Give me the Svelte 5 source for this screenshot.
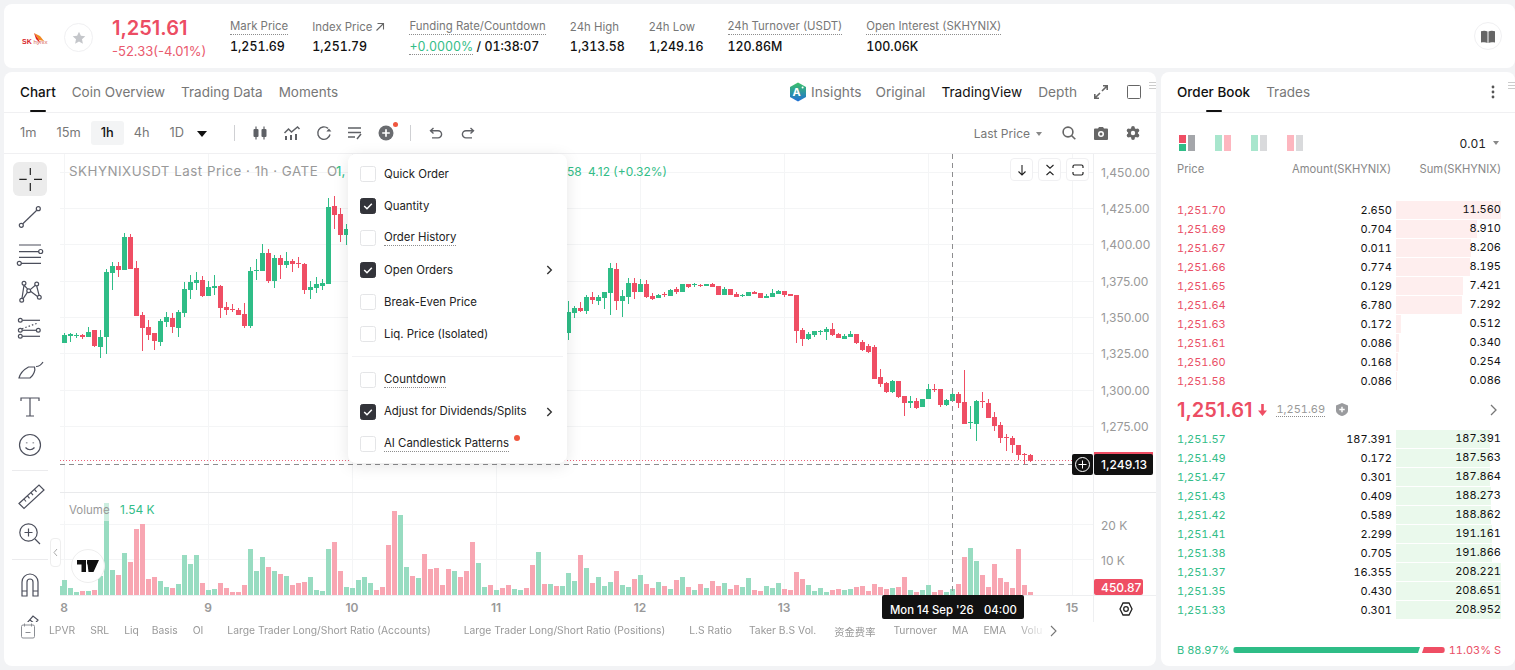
<script>
  const RED = '#ef4e64';
  const GREEN = '#2fbd87';

  // traced off the chart, units are 1/3 px: [body top, body bottom, wick top, wick bottom, green?]
  const seg = (cx0, y0, rows) =>
    rows.map((r, i) => ({
      cx: cx0 + i * 6,
      top: y0 + r[0] / 3,
      bot: y0 + r[1] / 3,
      wt: y0 + r[2] / 3,
      wb: y0 + r[3] / 3,
      up: !!r[4]
    }));

  const candles = [
    ...seg(64, 170, [
      [495,518,490,518,1],[493,497,490,515,1],[494,497,489,503,1],[494,500,492,506,0],[486,500,472,500,1],
      [480,527,480,530,0],[501,530,480,563,1],[306,500,297,552,1],[288,309,277,360,1],[288,300,277,320,0],
      [201,299,190,299,1],[201,297,193,297,0],[294,437,273,437,0],[435,473,427,542,0],[471,495,450,510,0],
      [489,513,489,540,0],[453,516,448,527,1],[441,456,427,471,1],[444,471,430,489,0],[426,474,421,500,1],
      [357,429,336,440,1],[336,360,315,387,1],[330,339,306,360,1],[330,378,318,382,0],[351,378,333,378,1],
      [348,354,315,375,1],[348,413,345,444,0],[411,420,396,435,0],[417,420,402,426,0],[420,435,414,435,0],
      [432,468,399,474,0],[303,468,292,474,1],[300,303,267,330,1],[249,303,222,303,1],[249,333,237,339,0],
      [264,333,255,354,1],[264,285,255,327,0],[273,285,246,294,1],[273,282,267,306,0],[279,282,262,294,0],
      [282,360,279,372,0],[351,360,333,387,1],[342,354,321,369,1],[339,348,327,360,1],[111,342,84,342,1],
      [108,135,78,178,0],[132,195,114,216,0],[177,195,162,225,1]
    ]),
    ...seg(568, 250, [
      [186,248,153,270,1],[174,189,168,204,1],[174,184,156,186,0],[141,183,135,192,1],[141,150,126,162,0],
      [141,153,135,165,1],[126,144,126,177,1],[54,129,39,195,1],[57,153,39,180,0],[138,153,120,201,1],
      [99,141,84,162,1],[99,126,84,147,0],[102,126,87,126,1],[102,141,90,144,0],[138,147,129,150,0],
      [135,144,132,144,1],[132,136,126,141,0],[120,138,117,138,1],[118,126,111,132,0],[102,126,102,126,1],
      [102,111,102,114,0],[103,106,99,111,1],[105,107,103,110,0],[102,107,102,107,1],[102,110,99,111,0],
      [108,135,108,135,0],[117,135,111,135,1],[117,135,117,135,0],[132,141,126,141,0],[135,137,132,141,1],
      [126,138,126,138,1],[126,132,123,132,0],[129,144,129,144,0],[138,144,132,144,1],[129,141,117,141,1],
      [123,132,120,132,1],[123,135,123,141,0],[132,137,132,137,0],[135,243,135,279,0],[240,267,234,288,0],
      [252,267,246,270,1],[243,255,243,261,1],[242,244,240,255,1],[237,246,231,270,1],[237,255,219,258,0],
      [252,264,249,264,0],[258,267,252,267,1],[252,261,243,261,1],[252,279,252,282,0]
    ]),
    ...seg(862, 350, [
      [-24,0,-30,3,0],[-12,5,-18,8,0],[-9,87,-15,87,0],[82,102,57,112,0],[98,126,95,130,0],[92,126,90,128,1],
      [93,141,93,143,0],[138,158,138,197,0],[152,158,139,174,1],[153,175,145,177,0],[147,171,147,171,1],
      [117,147,102,147,1],[117,121,102,127,0],[117,165,117,171,0],[150,165,147,168,1],[132,153,129,153,1],
      [132,159,126,174,0],[156,222,60,222,0],[216,219,168,237,1],[153,222,150,273,1],[154,157,127,174,0],
      [159,205,148,205,0],[201,228,186,243,0],[225,264,216,279,0],[261,263,252,303,0],[264,285,258,309,0],
      [285,315,285,330,0],[312,316,309,342,0],[315,333,312,336,0]
    ])
  ];

  // volume pane, tops in the same 1/3 px units, g = green, r = red
  const volFrom = (cx0, y0, tops, colours) =>
    tops.map((t, i) => ({ cx: cx0 + i * 6, top: y0 + t / 3, up: colours[i] === 'g' }));

  const volumes = [
    ...volFrom(64, 495,
      [255,279,291,288,288,285,243,24,225,240,174,201,102,87,252,246,258,276,279,267,180,207,180,264,285,282,264,279,291,291,270,162,228,186,216,228,237,243,270,264,261,246,285,288,162,141,228,276,279,255,246,264,285,276,150,48,60,216,243,249,177,222,219,270,222,228,246,228,141,204,276,270,285,279,270,282,285,279,210,171,267,267,273],
      'gggrgrgggr' + 'grrrrrggrg' + 'gggrggrrrr' + 'rgggrgrgrr' + 'rggggrrggg' + 'ggrrrrggrg' + 'rrrrrgrrrg' + 'grgrrggrrg' + 'rgr'
    ),
    ...[9,22,14,40,27,12,18,9,13,24,10,8,16,20,11,7,13,9,6,15,18,8,5,11,7,14,9,12,6,10,8,17,5,4,9,7,12,6,5,23,16,10,4,7,3,5,6,5,6,8]
      .map((h, i) => {
        const cx = 562 + i * 6;
        const c = candles.find((k) => k.cx === cx);
        return { cx, top: 595 - h, up: c ? c.up : true };
      }),
    ...volFrom(862, 350,
      [708,723,702,711,717,714,711,681,720,726,720,705,726,720,726,717,702,621,594,633,675,711,642,684,696,714,597,705,726],
      'rrrrrgrrgrggrrggrrggrrrrrrrrr'
    )
  ];

  const priceTicks = [
    ['1,450.00', 172], ['1,425.00', 208], ['1,400.00', 244], ['1,375.00', 281],
    ['1,350.00', 317], ['1,325.00', 353], ['1,300.00', 390], ['1,275.00', 426]
  ];
  const timeTicks = [['8', 64], ['9', 208], ['10', 352], ['11', 496], ['12', 640], ['13', 784], ['15', 1072]];

  const stats = [
    { label: 'Mark Price', value: '1,251.69', dotted: true },
    { label: 'Index Price', value: '1,251.79', arrow: true },
    { label: 'Funding Rate/Countdown', funding: true, dotted: true },
    { label: '24h High', value: '1,313.58' },
    { label: '24h Low', value: '1,249.16' },
    { label: '24h Turnover (USDT)', value: '120.86M', dotted: true },
    { label: 'Open Interest (SKHYNIX)', value: '100.06K', dotted: true }
  ];

  const menu = [
    { label: 'Quick Order' },
    { label: 'Quantity', on: true },
    { label: 'Order History', dotted: true },
    { label: 'Open Orders', on: true, more: true },
    { label: 'Break-Even Price' },
    { label: 'Liq. Price (Isolated)' }
  ];
  const menu2 = [
    { label: 'Countdown', dotted: true },
    { label: 'Adjust for Dividends/Splits', on: true, more: true },
    { label: 'AI Candlestick Patterns', dotted: true, dot: true }
  ];

  const intervals = ['1m', '15m', '1h', '4h', '1D'];

  const indicators = [
    { t: 'LPVR' }, { t: 'SRL' }, { t: 'Liq', cls: 'tight' }, { t: 'Basis' }, { t: 'OI' },
    { t: 'Large Trader Long/Short Ratio (Accounts)', cls: 'wide' },
    { t: 'Large Trader Long/Short Ratio (Positions)', cls: 'wide' },
    { t: 'L.S Ratio', cls: 'gap' }, { t: 'Taker B.S Vol.' }, { t: '资金费率', cls: 'cjk' },
    { t: 'Turnover' }, { t: 'MA' }, { t: 'EMA' }, { t: 'Volu' }
  ];

  const asks = [
    ['1,251.70', '2.650', 11.56], ['1,251.69', '0.704', 8.91], ['1,251.67', '0.011', 8.206],
    ['1,251.66', '0.774', 8.195], ['1,251.65', '0.129', 7.421], ['1,251.64', '6.780', 7.292],
    ['1,251.63', '0.172', 0.512], ['1,251.61', '0.086', 0.34], ['1,251.60', '0.168', 0.254],
    ['1,251.58', '0.086', 0.086]
  ];
  const bids = [
    ['1,251.57', '187.391', 187.391], ['1,251.49', '0.172', 187.563], ['1,251.47', '0.301', 187.864],
    ['1,251.43', '0.409', 188.273], ['1,251.42', '0.589', 188.862], ['1,251.41', '2.299', 191.161],
    ['1,251.38', '0.705', 191.866], ['1,251.37', '16.355', 208.221], ['1,251.35', '0.430', 208.651],
    ['1,251.33', '0.301', 208.952]
  ];
</script>

<div class="page">
  <header class="ticker">
    <div class="logo">
      <svg width="12" height="12" viewBox="0 0 12 12"><path d="M1 1l6 3 4 5-5-1-2-3z" fill="#f08a24" /><path d="M1 1l3 4 2 3 1 3-4-4z" fill="#e2231a" /></svg>
      <span class="logo-text"><b>SK</b> hynix</span>
    </div>
    <div class="star">
      <svg width="14" height="14" viewBox="0 0 14 14"><path d="M7 .8l1.9 4 4.4.5-3.3 3 .9 4.4L7 10.5l-3.9 2.2.9-4.4-3.3-3 4.4-.5z" fill="#c4c6ca" /></svg>
    </div>
    <div class="last">
      <div class="last-price">1,251.61</div>
      <div class="last-change">-52.33(-4.01%)</div>
    </div>
    <div class="stats">
      {#each stats as s}
        <div class="stat">
          <div class="stat-label">
            <span class:dotted={s.dotted}>{s.label}</span>
            {#if s.arrow}
              <svg width="10" height="10" viewBox="0 0 10 10"><path d="M1.5 8.5L8.5 1.5M2.5 1.5h6v6" fill="none" stroke="#666" stroke-width="1.1" /></svg>
            {/if}
          </div>
          <div class="stat-value">
            {#if s.funding}
              <span class="funding">+0.0000%</span> / 01:38:07
            {:else}
              {s.value}
            {/if}
          </div>
        </div>
      {/each}
    </div>
    <button class="book-btn" aria-label="Guide">
      <svg width="14" height="13" viewBox="0 0 14 13"><path d="M0 1.2C2.4.4 5 .5 6.5 1.6V13C5 12 2.4 11.9 0 12.6zM14 1.2C11.6.4 9 .5 7.5 1.6V13c1.5-1 4.1-1.1 6.5-.4z" fill="#666" /></svg>
    </button>
  </header>

  <div class="main">
    <section class="chart-card">
      <div class="tabs">
        <div class="tab-group">
          <span class="tab active">Chart<i></i></span>
          <span class="tab">Coin Overview</span>
          <span class="tab">Trading Data</span>
          <span class="tab">Moments</span>
        </div>
        <div class="view-group">
          <span class="insights">
            <svg width="18" height="20" viewBox="0 0 18 20">
              <defs><linearGradient id="aig" x1="0" y1="0" x2="0" y2="1"><stop offset="0" stop-color="#3cc267" /><stop offset="1" stop-color="#1f6fd6" /></linearGradient></defs>
              <path d="M9 .5l8 4.5v10l-8 4.5L1 15V5z" fill="url(#aig)" />
              <text x="7.6" y="14.4" class="ai-letter">A</text>
              <circle cx="13.6" cy="5.6" r="1" fill="#fff" />
            </svg>
            Insights
          </span>
          <span class="view">Original</span>
          <span class="view on">TradingView</span>
          <span class="view">Depth</span>
          <svg class="expand" width="14" height="14" viewBox="0 0 14 14"><path d="M8 6l5-5M9 .8h4.2V5M6 8l-5 5M.8 9v4.2H5" fill="none" stroke="#666" stroke-width="1.6" /></svg>
          <span class="square"></span>
        </div>
      </div>

      <div class="toolbar">
        <div class="intervals">
          {#each intervals as iv}
            <span class="iv" class:sel={iv === '1h'}>{iv}</span>
          {/each}
          <span class="iv-caret"></span>
        </div>
        <span class="tb-sep"></span>
        <div class="tb-icons">
          <svg width="16" height="16" viewBox="0 0 16 16" fill="#5f6166"><rect x="1.5" y="4" width="5" height="8" rx="1" /><rect x="3.4" y="1.5" width="1.2" height="13" /><rect x="9.5" y="4" width="5" height="8" rx="1" /><rect x="11.4" y="1.5" width="1.2" height="13" /></svg>
          <svg width="18" height="16" viewBox="0 0 18 16"><path d="M1.5 8l4-4 3 3 6-5 2 2" fill="none" stroke="#5f6166" stroke-width="1.5" /><path d="M2 11h2v4H2zM7 10h2v5H7zM12 9h2v6h-2z" fill="#5f6166" /></svg>
          <svg width="16" height="16" viewBox="0 0 16 16"><path d="M14 9.5A6.2 6.2 0 1 1 12 3.4" fill="none" stroke="#5f6166" stroke-width="1.4" /><path d="M10.4 6.6h5l-2.5-3z" fill="#5f6166" /></svg>
          <svg width="16" height="16" viewBox="0 0 16 16"><path d="M1 3h13M1 7.5h13M1 12h7" stroke="#5f6166" stroke-width="1.5" fill="none" /><path d="M10 14l4-5" stroke="#5f6166" stroke-width="1.5" /></svg>
          <span class="plus-wrap">
            <svg width="16" height="16" viewBox="0 0 16 16"><circle cx="8" cy="8" r="7.5" fill="#6a6c70" /><path d="M8 4.2v7.6M4.2 8h7.6" stroke="#fff" stroke-width="1.7" /></svg>
            <i></i>
          </span>
        </div>
        <span class="tb-sep second"></span>
        <div class="tb-undo">
          <svg width="14" height="12" viewBox="0 0 14 12"><path d="M4.5 1L1.5 3.7l3 2.7M1.8 3.7H9a3.6 3.6 0 0 1 0 7.2H3" fill="none" stroke="#5f6166" stroke-width="1.4" /></svg>
          <svg width="14" height="12" viewBox="0 0 14 12"><path d="M9.5 1l3 2.7-3 2.7M12.2 3.7H5a3.6 3.6 0 0 0 0 7.2h6" fill="none" stroke="#5f6166" stroke-width="1.4" /></svg>
        </div>
        <div class="tb-right">
          <span class="price-type">Last Price <i></i></span>
          <svg width="14" height="14" viewBox="0 0 14 14"><circle cx="6" cy="6" r="4.9" fill="none" stroke="#666" stroke-width="1.6" /><path d="M9.5 9.5l3.8 3.8" stroke="#666" stroke-width="1.6" /></svg>
          <svg width="14" height="13" viewBox="0 0 14 13"><path d="M4 1.5L5 0h4l1 1.5h3a1 1 0 0 1 1 1V12a1 1 0 0 1-1 1H1a1 1 0 0 1-1-1V2.500a1 1 0 0 1 1-1z" fill="#666" /><circle cx="7" cy="7" r="3" fill="#fff" /><circle cx="7" cy="7" r="1.5" fill="#666" /></svg>
          <svg width="14" height="14" viewBox="0 0 14 14" fill="#666"><circle cx="7" cy="7" r="5" /><circle cx="7" cy="2" r="1.900" /><circle cx="7" cy="12" r="1.900" /><circle cx="2.700" cy="4.500" r="1.900" /><circle cx="11.300" cy="4.500" r="1.900" /><circle cx="2.700" cy="9.500" r="1.900" /><circle cx="11.300" cy="9.500" r="1.900" /><circle cx="7" cy="7" r="2.200" fill="#fff" /></svg>
        </div>
      </div>

      <div class="chart-body">
        <div class="rail">
          <span class="tool sel"><svg viewBox="0 0 34 34"><path d="M6.300 17.300h7.400M21 17.300h8M17.300 6v7M17.300 21v8" stroke="#222" stroke-width="1.2" fill="none" /></svg></span>
          <span class="tool"><svg viewBox="0 0 34 34"><circle cx="8.300" cy="25.300" r="2" /><circle cx="25.300" cy="8.700" r="2" /><path d="M9.800 23.800L23.800 10.200" /></svg></span>
          <span class="tool"><svg viewBox="0 0 34 34"><path d="M6 7h22M6 13.700h20M6 19.300h22M8 25.300h20" /><circle cx="27.700" cy="13.500" r="2" /><circle cx="6.300" cy="25.300" r="2" /></svg></span>
          <span class="tool"><svg viewBox="0 0 34 34"><circle cx="11" cy="7.300" r="1.900" /><circle cx="23.700" cy="8" r="1.900" /><circle cx="15.700" cy="14.700" r="1.900" /><circle cx="8.700" cy="24.300" r="1.900" /><circle cx="26.300" cy="21.300" r="1.900" /><path d="M11 9.200l3.700 3.900M22.400 9.300l-5.200 4.300M14.500 16.200l-4.500 6.600M11 9.200l-2 13.200M23.700 10l2.400 9.400M17.500 15.200l7 5.300" /></svg></span>
          <span class="tool"><svg viewBox="0 0 34 34"><circle cx="7.300" cy="6.300" r="1.900" /><path d="M9.300 6.300H27" /><circle cx="7.300" cy="16.300" r="1.900" /><circle cx="25.300" cy="16.300" r="1.900" /><path d="M9.300 16.300h14" /><circle cx="7.300" cy="22.300" r="1.900" /><path d="M9.300 22.300H27" /><path d="M9 14.700L25 9" stroke-dasharray="1.500 2" /></svg></span>
          <span class="tool"><svg viewBox="0 0 34 34"><path d="M6 26h11c4-3 5.500-8 4.500-11h-6C10 18 7 22 6 26zM23 14.500c3 0 5.500-2 7-4.500" /></svg></span>
          <span class="tool"><svg viewBox="0 0 34 34"><path d="M8 11V8h18v3M17 8v18M13 26h8" /></svg></span>
          <span class="tool"><svg viewBox="0 0 34 34"><circle cx="17" cy="17" r="10.500" /><path d="M12.500 19.500c2.500 3 6.500 3 9 0" /><path d="M13.700 14.600v.6M20.300 14.600v.6" stroke-width="1.600" /></svg></span>
          <span class="rail-sep"></span>
          <span class="tool"><svg viewBox="0 0 34 34"><path d="M6 24.500L26 6l5 5-20 18.500zM11 20l2 2.500M14.500 16.800l2 2.500M18 13.600l2 2.500M21.500 10.400l2 2.500" /></svg></span>
          <span class="tool"><svg viewBox="0 0 34 34"><circle cx="15.500" cy="15.500" r="8.700" /><path d="M15.500 11.500v8M11.500 15.500h8M22 22l5 5" /></svg></span>
          <span class="rail-sep"></span>
          <span class="tool"><svg viewBox="0 0 34 34"><path d="M9 28V14a8 8 0 0 1 16 0v14h-5V14a3 3 0 0 0-6 0v14zM9 23h5M20 23h5" /></svg></span>
          <span class="tool"><svg viewBox="0 0 34 34"><path d="M8 24L20 10l5 4-12 14zM17 14l5 4M22 28h6" /></svg></span>
        </div>

        <div class="plot">
          <svg class="chart-svg" width="1096" height="468" viewBox="60 154 1096 468">
            <g class="grid">
              {#each priceTicks as t}<line x1="60" x2="1094" y1={t[1] + 0.5} y2={t[1] + 0.5} />{/each}
              <line x1="60" x2="1094" y1="524.500" y2="524.500" />
              <line x1="60" x2="1094" y1="559.500" y2="559.500" />
              {#each [64, 208, 352, 496, 640, 784, 928, 1072] as x}<line x1={x + 0.5} x2={x + 0.5} y1="153" y2="595" />{/each}
            </g>
            <line x1="60" x2="1156" y1="492.500" y2="492.500" class="pane-line" />
            <line x1="1093.500" x2="1093.500" y1="153" y2="622" class="axis-line" />
            <line x1="60" x2="1156" y1="595.500" y2="595.500" class="axis-line" />

            <g shape-rendering="crispEdges">
              {#each candles as c}
                <rect x={c.cx} y={c.wt} width="1" height={c.wb - c.wt} fill={c.up ? GREEN : RED} />
                <rect x={c.cx - 2} y={c.top} width="5" height={Math.max(1, c.bot - c.top)} fill={c.up ? GREEN : RED} />
              {/each}
              <rect x="60" y="586" width="2" height="9" fill="#98dcc1" />
              {#each volumes as v}
                <rect x={v.cx - 2} y={v.top} width="5" height={595 - v.top} fill={v.up ? '#98dcc1' : '#f8a6b2'} />
              {/each}
            </g>
            <rect x="64" y="499" width="47" height="22" fill="#fff" opacity="0.5" />

            <line x1="60" x2="1094" y1="460.500" y2="460.500" class="last-line" />
            <line x1="60" x2="1072" y1="464.500" y2="464.500" class="cross-line" />
            <line x1="952.500" x2="952.500" y1="154" y2="595" class="cross-line" />

            <text x="69" y="176" class="legend title">SKHYNIXUSDT Last Price · 1h · GATE</text>
            <text x="327" y="176" class="legend">O</text>
            <text x="336" y="176" class="legend-up">1,</text>
            <text x="567" y="176" class="legend-up num">58</text>
            <text x="588" y="176" class="legend-up num">4.12 (+0.32%)</text>
            <text x="69" y="514" class="legend small">Volume</text>
            <text x="120" y="514" class="legend-up small">1.54 K</text>

            {#each priceTicks as t}<text x="1101" y={t[1] + 4.5} class="tick">{t[0]}</text>{/each}
            <text x="1101" y="529.500" class="tick">20 K</text>
            <text x="1101" y="564.500" class="tick">10 K</text>
            {#each timeTicks as t}<text x={t[1]} y="612" class="time" text-anchor="middle">{t[0]}</text>{/each}

            <rect x="1094" y="452" width="59" height="4" fill={RED} />
            <rect x="1072" y="454" width="21" height="21" rx="2" fill="#111" />
            <rect x="1094" y="454" width="59" height="21" rx="2" fill="#111" />
            <circle cx="1082.500" cy="464.500" r="7" fill="none" stroke="#fff" />
            <path d="M1082.500 460.500v8M1078.500 464.500h8" stroke="#fff" />
            <text x="1101" y="468.500" class="tag">1,249.13</text>
            <rect x="1094" y="579" width="49" height="16" rx="2" fill={RED} />
            <text x="1101" y="592" class="tag">450.87</text>
            <rect x="882" y="595" width="142" height="24" rx="2" fill="#111" />
            <text x="890" y="614" class="tag date">Mon 14 Sep '26</text>
            <text x="984" y="614" class="tag date">04:00</text>
            <path d="M1120 609l3-6h6l3 6-3 6h-6z" fill="none" stroke="#222" stroke-width="1.300" />
            <circle cx="1126" cy="609" r="2.300" fill="none" stroke="#222" stroke-width="1.300" />
          </svg>

          <div class="float-btns">
            <span><svg width="12" height="12" viewBox="0 0 12 12"><path d="M6 1v10M2.500 7.500L6 11l3.500-3.500" fill="none" stroke="#222" stroke-width="1.100" /></svg></span>
            <span><svg width="12" height="12" viewBox="0 0 12 12"><path d="M2.500 1L6 4.200 9.500 1M2.500 11L6 7.800 9.500 11" fill="none" stroke="#222" stroke-width="1.100" /></svg></span>
            <span><svg width="12" height="12" viewBox="0 0 12 12"><path d="M1 4V2.500A1.500 1.500 0 0 1 2.500 1h7A1.500 1.500 0 0 1 11 2.500V4M1 8v1.500A1.500 1.500 0 0 0 2.500 11h7A1.500 1.500 0 0 0 11 9.500V8" fill="none" stroke="#222" stroke-width="1.200" /></svg></span>
          </div>

          <button class="tv-logo" aria-label="TradingView">
            <svg width="22" height="12" viewBox="0 0 22 12"><path d="M0 0h9v12H4.500V4.500H0zM10 0h12l-5.500 12H11.500z" fill="#111" /><circle cx="12.500" cy="2.500" r="2.500" fill="#111" /></svg>
          </button>
          <span class="collapse"><svg width="5" height="9" viewBox="0 0 5 9"><path d="M4 1L1 4.500 4 8" fill="none" stroke="#aaa" /></svg></span>

          <div class="menu">
            {#each menu as m}
              <div class="menu-row">
                <span class="check" class:on={m.on}>
                  {#if m.on}<svg width="12" height="12" viewBox="0 0 12 12"><path d="M2.200 6l2.800 2.800 4.800-5" fill="none" stroke="#fff" stroke-width="1.500" /></svg>{/if}
                </span>
                <span class:dotted={m.dotted}>{m.label}</span>
                {#if m.more}<svg class="more" width="7" height="10" viewBox="0 0 7 10"><path d="M1.300 1l4 4-4 4" fill="none" stroke="#333" stroke-width="1.400" /></svg>{/if}
              </div>
            {/each}
            <div class="menu-sep"></div>
            {#each menu2 as m}
              <div class="menu-row">
                <span class="check" class:on={m.on}>
                  {#if m.on}<svg width="12" height="12" viewBox="0 0 12 12"><path d="M2.200 6l2.800 2.800 4.800-5" fill="none" stroke="#fff" stroke-width="1.500" /></svg>{/if}
                </span>
                <span class:dotted={m.dotted}>{m.label}</span>
                {#if m.dot}<i class="new-dot"></i>{/if}
                {#if m.more}<svg class="more" width="7" height="10" viewBox="0 0 7 10"><path d="M1.300 1l4 4-4 4" fill="none" stroke="#333" stroke-width="1.400" /></svg>{/if}
              </div>
            {/each}
          </div>
        </div>
      </div>

      <div class="ind-bar">
        <svg class="ind-cal" width="16" height="16" viewBox="0 0 16 16"><path d="M3 2h10a1.500 1.500 0 0 1 1.500 1.500v10A1.500 1.500 0 0 1 13 15H3a1.500 1.500 0 0 1-1.500-1.500v-10A1.500 1.500 0 0 1 3 2zM4.500 .5v3M11.500 .5v3M5.500 9.500h5" fill="none" stroke="#8a8d93" stroke-width="1" /></svg>
        <div class="ind-list">
          {#each indicators as n}<span class={n.cls}>{n.t}</span>{/each}
        </div>
        <svg width="7" height="12" viewBox="0 0 7 12"><path d="M1 1l5 5-5 5" fill="none" stroke="#777" stroke-width="1.100" /></svg>
      </div>
      <span class="grip" aria-hidden="true"></span>
    </section>

    <aside class="book">
      <div class="book-tabs">
        <span class="tab active">Order Book<i></i></span>
        <span class="tab">Trades</span>
        <svg class="dots" width="4" height="14" viewBox="0 0 4 14" fill="#555"><circle cx="2" cy="2" r="1.400" /><circle cx="2" cy="7" r="1.400" /><circle cx="2" cy="12" r="1.400" /></svg>
      </div>
      <span class="grip book-grip" aria-hidden="true"></span>

      <div class="book-controls">
        <span class="layout"><b class="duo"><i style="background:{RED}"></i><i style="background:{GREEN}"></i></b><b style="background:#a4a6aa"></b></span>
        <span class="layout"><b style="background:#a8e6cd"></b><b style="background:#fdb6bf"></b></span>
        <span class="layout"><b style="background:#a8e6cd"></b><b style="background:#d9dadc"></b></span>
        <span class="layout"><b style="background:#fdb6bf"></b><b style="background:#d9dadc"></b></span>
        <span class="step">0.01 <i></i></span>
      </div>

      <div class="book-head">
        <span>Price</span><span class="amt">Amount(SKHYNIX)</span><span class="sum-h">Sum(SKHYNIX)</span>
      </div>

      <div class="rows asks">
        {#each asks as r}
          <div class="row">
            <span class="p red">{r[0]}</span>
            <span class="a">{r[1]}</span>
            <span class="s"><i class="bar ask" style="width:{(r[2] / 11.56) * 100}%"></i><em>{r[2].toFixed(3)}</em></span>
          </div>
        {/each}
      </div>

      <div class="mid">
        <span class="mid-price">1,251.61</span>
        <svg width="9" height="12" viewBox="0 0 9 12"><path d="M3.200 0h2.600v6.500H9L4.500 12 0 6.500h3.200z" fill={RED} /></svg>
        <span class="mid-mark">1,251.69</span>
        <svg width="12" height="13" viewBox="0 0 12 13"><path d="M6 0l6 2.500v5C12 10.500 9 12.300 6 13 3 12.300 0 10.500 0 7.500v-5z" fill="#9a9b9e" /><path d="M6 3.800v5.400M3.300 6.500h5.400" stroke="#fff" stroke-width="1.400" /></svg>
        <svg class="mid-more" width="7" height="12" viewBox="0 0 7 12"><path d="M1 1l5 5-5 5" fill="none" stroke="#777" stroke-width="1.300" /></svg>
      </div>

      <div class="rows">
        {#each bids as r}
          <div class="row">
            <span class="p green">{r[0]}</span>
            <span class="a">{r[1]}</span>
            <span class="s"><i class="bar bid" style="width:{(r[2] / 208.952) * 100}%"></i><em>{r[2].toFixed(3)}</em></span>
          </div>
        {/each}
      </div>

      <div class="ratio">
        <span class="green">B 88.97%</span>
        <div class="ratio-bar">
          <i class="buy"></i><i class="sell"></i>
        </div>
        <span class="red">11.03% S</span>
      </div>
    </aside>
  </div>
</div>

<style>
  :global(body) {
    margin: 0;
    background: #f2f3f5;
    font-family: Inter, "Noto Sans CJK SC", sans-serif;
    color: #111;
    overflow: hidden;
  }
  .page {
    width: 1515px;
    height: 670px;
    padding: 4px 0 0 4px;
    box-sizing: border-box;
  }
  .red { color: #ea4f66; }
  .green { color: #33bd88; }
  .dotted { border-bottom: 1px dotted #8d8d8d; }

  /* header */
  .ticker {
    display: flex;
    height: 64px;
    background: #fff;
    border-radius: 8px;
    align-items: flex-start;
    position: relative;
  }
  .logo { width: 60px; margin-left: 18px; margin-top: 25px; height: 20px; position: relative; }
  .logo svg { position: absolute; left: 11px; top: 3px; }
  .logo-text { position: absolute; left: 0; top: 9px; font: 6px "Liberation Sans", sans-serif; color: #d86a5a; white-space: nowrap; }
  .logo-text b { color: #d8262c; font-size: 7px; }
  .star {
    width: 27px; height: 27px; margin: 19px 0 0 -18px;
    border: 1px solid #f0f0f2; border-radius: 50%;
    display: flex; align-items: center; justify-content: center;
  }
  .last { margin-left: 19px; width: 118px; padding-top: 12px; }
  .last-price { font-size: 20px; font-weight: 600; color: #ec4d63; line-height: 24px; }
  .last-change { font-size: 13px; color: #ea5a6e; line-height: 18px; margin-top: 2px; }
  .stats { display: flex; gap: 24px; padding-top: 14px; }
  .stat-label { font-size: 11.400px; color: #777; line-height: 16px; white-space: nowrap; display: flex; align-items: center; gap: 3px; height: 17px; }
  .stat-label span { line-height: 16px; }
  .stat-value { font-size: 12.400px; font-weight: 500; line-height: 18px; margin-top: 3px; color: #111; white-space: nowrap; font-variant-numeric: tabular-nums; }
  .funding { color: #33bd88; font-weight: 400; border-bottom: 1px dotted #8d8d8d; }
  .book-btn {
    position: absolute; right: 13px; top: 18px;
    width: 28px; height: 28px; border-radius: 50%;
    border: 1px solid #f0f0f2; background: #fff; padding: 0;
    display: flex; align-items: center; justify-content: center;
  }

  .main { display: flex; gap: 5px; margin-top: 4px; height: 594px; }

  /* chart card */
  .chart-card { width: 1152px; background: #fff; border-radius: 8px; position: relative; overflow: hidden; }
  .tabs {
    display: flex; justify-content: space-between; align-items: flex-start;
    height: 41px; box-sizing: border-box; padding: 0 15px 0 16px;
    border-bottom: 1px solid #f0f0f2;
  }
  .tab-group { display: flex; gap: 16px; }
  .tab { font-size: 13.500px; color: #777; position: relative; line-height: 40px; display: block; }
  .tab.active { color: #111; font-weight: 500; }
  .tab i { position: absolute; left: 50%; bottom: 0; width: 16px; height: 2px; margin-left: -8px; background: #111; border-radius: 1px; }
  .view-group { display: flex; align-items: center; font-size: 13.700px; color: #777; height: 40px; }
  .insights { display: flex; align-items: center; gap: 4px; margin-right: 14px; }
  .ai-letter { font: 700 11px Inter, sans-serif; fill: #fff; text-anchor: middle; }
  .view { margin-right: 16px; }
  .view.on { color: #111; }
  .expand { margin-left: 1px; }
  .square { width: 12px; height: 12px; border: 1.5px solid #666; border-radius: 1.5px; margin-left: 19px; box-sizing: content-box; }

  .toolbar {
    display: flex; align-items: center; height: 40px;
    padding-left: 6px; font-size: 12px; color: #777;
  }
  .intervals { display: flex; align-items: center; width: 224px; flex: none; font-size: 12.800px; }
  .iv { padding: 0 10px; height: 24px; line-height: 24px; }
  .iv.sel { background: #f3f4f5; color: #111; font-weight: 500; border-radius: 3px; }
  .iv-caret { width: 0; height: 0; border: 5px solid transparent; border-top: 6px solid #111; border-bottom: 0; margin-left: 3px; margin-top: 1px; }
  .tb-sep { width: 1px; height: 16px; background: #cfd0d3; }
  .tb-sep.second { margin-left: 16px; }
  .tb-icons { display: flex; align-items: center; gap: 15px; margin-left: 17px; }
  .plus-wrap { position: relative; display: flex; }
  .plus-wrap i { position: absolute; right: -4px; top: -3px; width: 5px; height: 5px; border-radius: 50%; background: #f0573f; }
  .tb-undo { display: flex; gap: 18px; margin-left: 18px; }
  .tb-right { margin-left: auto; display: flex; align-items: center; gap: 18px; padding-right: 16px; }
  .price-type { display: flex; align-items: center; gap: 6px; margin-right: 2px; }
  .price-type i { width: 0; height: 0; border: 3.5px solid transparent; border-top: 4px solid #888; border-bottom: 0; margin-top: 1px; }

  .chart-body { display: flex; height: 468px; border-top: 1px solid #f0f0f2; }
  .rail { width: 56px; height: 468px; overflow: hidden; display: flex; flex-direction: column; align-items: center; gap: 4px; padding: 8px 4px 0 0; box-sizing: border-box; flex: none; }
  .tool { width: 34px; height: 34px; flex: none; border-radius: 6px; display: block; }
  .tool.sel { background: #ececec; }
  .tool svg { width: 34px; height: 34px; fill: none; stroke: #4c4f5c; stroke-width: 1.200; display: block; }
  .rail-sep { width: 36px; height: 1px; background: #ebebed; flex: none; margin: 4px 0 4px; }

  .plot { position: relative; width: 1096px; height: 468px; flex: none; }
  .chart-svg { display: block; }
  .grid line { stroke: #f4f5f6; stroke-width: 1; }
  .pane-line { stroke: #e9eaec; }
  .axis-line { stroke: #eeeff1; }
  .last-line { stroke: #e9647a; stroke-dasharray: 1 2; }
  .cross-line { stroke: #8d8d8f; stroke-dasharray: 5 4; }
  .legend { font-size: 13.300px; fill: #999; }
  .legend.title { letter-spacing: 0.52px; }
  .legend-up { font-size: 13.300px; fill: #33bd88; }
  .legend-up.num { font-size: 12px; }
  .legend.small { font-size: 11.500px; }
  .legend-up.small { font-size: 12px; }
  .tick { font-size: 12px; fill: #999; }
  .time { font-size: 12px; fill: #999; font-weight: 600; }
  .tag { font-size: 12px; fill: #fff; font-weight: 500; }
  .tag.date { font-size: 11.300px; }

  .float-btns { position: absolute; left: 950px; top: 4px; display: flex; gap: 5px; }
  .float-btns span {
    width: 23px; height: 23px; box-sizing: border-box;
    background: #fff; border: 1px solid #f0f0f2; border-radius: 4px;
    display: flex; align-items: center; justify-content: center;
  }
  .tv-logo {
    position: absolute; left: 11px; top: 395px; width: 34px; height: 34px;
    border-radius: 50%; border: 1px solid #eee; background: #fff; padding: 0;
    display: flex; align-items: center; justify-content: center;
  }
  .collapse {
    position: absolute; left: -10px; top: 384px; width: 9px; height: 27px;
    border: 1px solid #eee; border-radius: 4px; background: #fff;
    display: flex; align-items: center; justify-content: center;
  }

  .menu {
    position: absolute; left: 288px; top: 0; width: 219px; height: 309px;
    box-sizing: border-box; background: #fff; border-radius: 8px;
    box-shadow: 0 3px 16px rgba(0, 0, 0, 0.1);
    padding-top: 4px; font-size: 11.400px; color: #222;
  }
  .menu-row { display: flex; align-items: center; height: 32px; padding: 0 14px 0 12px; position: relative; }
  .menu-row > span:nth-child(2) { line-height: 15px; }
  .check {
    width: 16px; height: 16px; box-sizing: border-box; flex: none;
    border: 1px solid #e4e5e7; border-radius: 2.500px; margin-right: 8px;
    display: flex; align-items: center; justify-content: center;
  }
  .check.on { background: #33343a; border-color: #33343a; }
  .more { margin-left: auto; }
  .new-dot { width: 6px; height: 6px; border-radius: 50%; background: #f0573f; margin: -11px 0 0 5px; }
  .menu-sep { height: 1px; background: #f2f2f4; margin: 6px 4px 6.500px 4px; }

  .ind-bar { display: flex; align-items: center; height: 18px; padding-left: 16px; font-size: 10.300px; color: #999; position: relative; }
  .ind-cal { flex: none; margin-right: 13px; background: #fff; }
  .ind-list { display: flex; gap: 15px; width: 998px; overflow: hidden; white-space: nowrap; -webkit-mask-image: linear-gradient(to right, #000 97%, transparent); mask-image: linear-gradient(to right, #000 97%, transparent); margin-right: 3px; }
  .ind-list .wide { padding: 0 9px; }
  .ind-list .tight { margin-right: -2px; }
  .ind-list .gap { margin-right: 2px; }
  .ind-list .cjk { padding: 0 3px; }

  .grip { position: absolute; right: 0; top: 10px; width: 7px; height: 7px; border-top: 1px solid #ccc; border-bottom: 1px solid #ccc; box-sizing: border-box; }
  .grip::after { content: ''; display: block; height: 1px; margin-top: 2px; background: #ccc; }

  /* order book */
  .book { width: 354px; background: #fff; border-radius: 8px; position: relative; box-sizing: border-box; }
  .book-tabs { display: flex; gap: 16px; height: 41px; box-sizing: border-box; padding-left: 16px; align-items: flex-start; border-bottom: 1px solid #f0f0f2; position: relative; }
  .dots { position: absolute; left: 330px; top: 13px; }
  .book-grip { right: 0; top: 10px; }
  .book-controls { display: flex; align-items: center; height: 16px; margin: 22px 14px 0 18px; position: relative; }
  .layout { display: flex; gap: 2px; width: 16px; height: 16px; margin-right: 20px; }
  .layout b { flex: 1; display: block; }
  .layout b.duo { display: flex; flex-direction: column; gap: 1px; }
  .layout b.duo i { flex: 1; display: block; }
  .step { margin-left: auto; font-size: 12px; color: #222; display: flex; align-items: center; gap: 7px; font-variant-numeric: tabular-nums; }
  .step i { width: 0; height: 0; border: 3px solid transparent; border-top: 4px solid #888; border-bottom: 0; margin-right: 2px; }
  .book-head { display: flex; margin: 9px 14px 0 16px; font-size: 11.200px; color: #888; line-height: 18px; }
  .book-head .amt { margin-left: auto; }
  .book-head .sum-h { width: 110px; text-align: right; }
  .rows { margin: 0 14px 0 16px; }
  .rows.asks { margin-top: 22px; }
  .row { display: flex; height: 19px; align-items: center; font-size: 11px; font-variant-numeric: tabular-nums; }
  .row .p { flex: 1; }
  .row .a { color: #111; padding-right: 4px; }
  .row .s { width: 105px; height: 18px; position: relative; text-align: right; line-height: 17px; flex: none; }
  .s em { position: relative; font-style: normal; color: #111; }
  .bar { position: absolute; left: 0; top: 0; height: 18px; display: block; }
  .bar.ask { background: #feeeee; }
  .bar.bid { background: #eaf9ec; }
  .mid { display: flex; align-items: center; height: 39px; margin: 0 18px 0 16px; gap: 6px; position: relative; }
  .mid-price { font-size: 20px; font-weight: 600; color: #ec4d63; }
  .mid-mark { font-size: 11px; color: #999; border-bottom: 1px dotted #8d8d8d; margin-left: 3px; margin-right: 5px; font-variant-numeric: tabular-nums; }
  .mid-more { margin-left: auto; }
  .ratio { display: flex; align-items: center; gap: 4px; margin: 24px 14px 0 16px; font-size: 11px; line-height: 14px; font-variant-numeric: tabular-nums; }
  .ratio-bar { flex: 1; display: flex; gap: 2px; height: 6px; }
  .buy { width: 88.300%; background: #2fbd87; border-radius: 3px 0 0 3px; clip-path: polygon(0 0, 100% 0, calc(100% - 2px) 100%, 0 100%); }
  .sell { flex: 1; background: #ef4e64; border-radius: 0 3px 3px 0; clip-path: polygon(2px 0, 100% 0, 100% 100%, 0 100%); }
</style>
